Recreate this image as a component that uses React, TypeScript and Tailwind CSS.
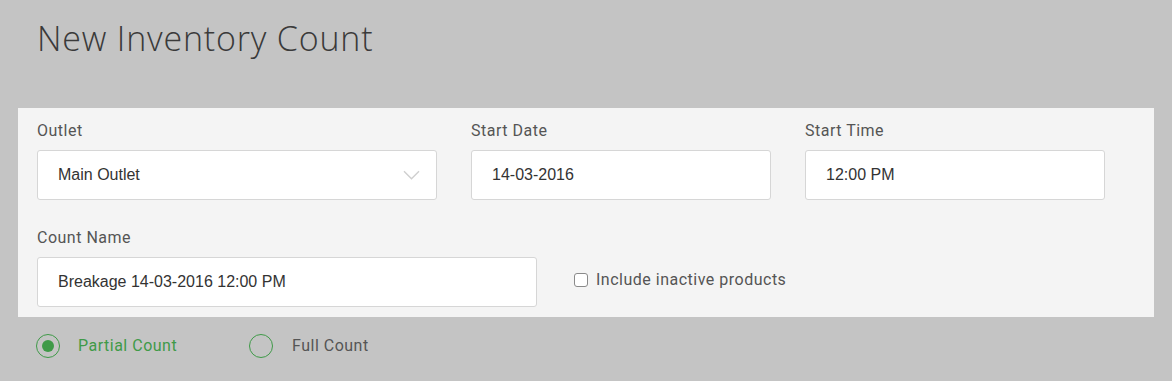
const label = "block text-[16px] leading-5 tracking-[0.5px] text-[#555] font-['Roboto',sans-serif]";
const box =
  "flex h-[50px] items-center rounded-[3px] border border-[#d6d6d6] bg-white pl-5 pr-4 text-[16px] text-[#333] font-['Liberation_Sans',Arial,sans-serif]";

function Chevron() {
  return (
    <svg width="17" height="10" viewBox="0 0 17 10" fill="none" aria-hidden="true">
      <path d="M1 1.2 8.5 8.7 16 1.2" stroke="#cfcfcf" strokeWidth="1.4" />
    </svg>
  );
}

export default function App() {
  return (
    <div className="min-h-[381px] w-[1172px] bg-[#c4c4c4] font-['Roboto',sans-serif]">
      {/* Header */}
      <h1 className="pl-[37px] pt-[18px] font-['Open_Sans',sans-serif] text-[34px] font-light leading-10 tracking-[0.8px] text-[#3a3a3a]">
        New Inventory Count
      </h1>

      {/* Form panel */}
      <section className="ml-[18px] mt-[50px] w-[1136px] bg-[#f4f4f4] pb-[10px] pl-[19px] pt-[13px]">
        <div className="flex gap-[34px]">
          <div className="w-[400px]">
            <span className={label}>Outlet</span>
            <div className={`${box} mt-[9px] justify-between`}>
              <span>Main Outlet</span>
              <Chevron />
            </div>
          </div>
          <div className="w-[300px]">
            <span className={label}>Start Date</span>
            <div className={`${box} mt-[9px]`}>14-03-2016</div>
          </div>
          <div className="w-[300px]">
            <span className={label}>Start Time</span>
            <div className={`${box} mt-[9px]`}>12:00 PM</div>
          </div>
        </div>

        <div className="mt-[28px] flex items-end gap-[37px]">
          <div className="w-[500px]">
            <span className={label}>Count Name</span>
            <div className={`${box} mt-[9px]`}>Breakage 14-03-2016 12:00 PM</div>
          </div>
          <label className="mb-[17px] flex items-center gap-2 text-[16px] leading-5 tracking-[0.5px] text-[#555]">
            <span className="h-[14px] w-[14px] rounded-[3px] border border-[#8a8a8a] bg-white" />
            Include inactive products
          </label>
        </div>
      </section>

      {/* Count type */}
      <div className="flex items-center pl-[36px] pt-[17px] text-[16px] leading-5 tracking-[0.5px]">
        <div className="flex w-[213px] items-center gap-[18px] text-[#3f9a48]">
          <span className="flex h-[24px] w-[24px] items-center justify-center rounded-full border border-[#3f9a48]">
            <span className="h-[12px] w-[12px] rounded-full bg-[#3f9a48]" />
          </span>
          Partial Count
        </div>
        <div className="flex items-center gap-[19px] text-[#555]">
          <span className="h-[24px] w-[24px] rounded-full border border-[#3f9a48]" />
          Full Count
        </div>
      </div>
    </div>
  );
}
